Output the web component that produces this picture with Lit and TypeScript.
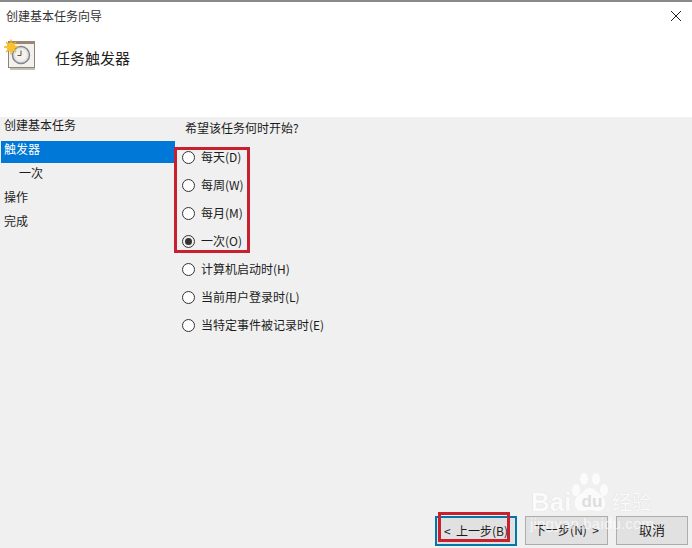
import { LitElement, html, css } from "lit";
import { customElement } from "lit/decorators.js";

const options = ["每天(D)", "每周(W)", "每月(M)", "一次(O)", "计算机启动时(H)", "当前用户登录时(L)", "当特定事件被记录时(E)"];

@customElement("app-root")
export class AppRoot extends LitElement {
  static styles = css`
    :host {
      display: flex;
      flex-direction: column;
      position: relative;
      width: 692px;
      height: 548px;
      overflow: hidden;
      background: #fff;
      color: #1c1c1c;
      font: 12px/24px "Noto Sans CJK SC", "Liberation Sans", sans-serif;
    }
    .header {
      height: 115px;
      border-top: 2px solid #8a8a8a;
      flex: none;
    }
    .titlebar {
      display: flex;
      justify-content: space-between;
      align-items: center;
      height: 28px;
      padding: 0 10px 0 6px;
      color: #333;
    }
    .close { display: block; width: 12px; height: 12px; }
    .heading {
      display: flex;
      align-items: center;
      gap: 19px;
      padding: 8px 0 0 4px;
    }
    .heading svg { display: block; width: 32px; height: 32px; }
    .heading span { font-size: 15px; margin-top: 7px; color: #222; }
    .body {
      flex: 1;
      display: flex;
      background: #f0f0f0;
      position: relative;
    }
    nav { width: 175px; margin-top: -4px; flex: none; }
    nav div { height: 24px; padding-left: 4px; }
    nav div.sel {
      background: #0078d7; color: #fff; margin: 4px 0 -2px 1px; padding-left: 3px;
      height: 22px; line-height: 16px;
    }
    nav div.sub { padding-left: 19px; }
    main { flex: 1; margin-top: -1px; }
    .q { height: 24px; margin-left: 10px; }
    .opts { margin-top: 3px; }
    .opt { display: flex; align-items: center; height: 28px; margin-left: 7px; gap: 6px; }
    .radio {
      width: 13px; height: 13px; box-sizing: border-box; border: 1px solid #333; border-radius: 50%;
      background: #fff; display: flex; align-items: center; justify-content: center; flex: none;
    }
    .radio.on { background: #f0f0f0; }
    .radio.on i { display: block; width: 7px; height: 7px; border-radius: 50%; background: #333; }
    .buttons {
      position: absolute; right: 4px; bottom: 2px; display: flex; gap: 8px; align-items: flex-end;
    }
    button {
      width: 72px; height: 29px; box-sizing: border-box; padding: 0 0 2px;
      background: #e1e1e1; border: 1px solid #adadad; color: #1c1c1c;
      font: 12px "Noto Sans CJK SC", "Liberation Sans", sans-serif;
      white-space: pre;
    }
    button.b1 { width: 82px; height: 30px; border: 2px solid #0078a8; }
    button.b2 { width: 83px; margin-bottom: 1px; }
    button.b3 { margin-bottom: 1px; font-size: 13px; }
    .mark { position: absolute; border: 3px solid #c8202e; box-sizing: border-box; pointer-events: none; }
    .m1 { left: 174px; top: 147px; width: 76px; height: 106px; }
    .m2 { left: 438px; top: 512px; width: 72px; height: 30px; }
    .wm { position: absolute; left: 530px; top: 472px; width: 135px; height: 62px; color: #fbfbfb; text-shadow: 0 0 1px #cfcfcf; }
    .wm svg { position: absolute; left: 41px; top: 1px; width: 38px; height: 39px; }
    .bai { position: absolute; left: 1px; top: 17px; font: bold 26px/26px "Liberation Sans", sans-serif; }
    .du { position: absolute; left: 45px; top: 21px; width: 34px; text-align: center; color: #dedede; text-shadow: none; font: bold 17px/18px "Liberation Sans", sans-serif; }
    .jy { position: absolute; left: 82px; top: 18px; font-size: 20px; line-height: 24px; }
    .url { position: absolute; left: 0; top: 43px; font: 15px/17px "Liberation Sans", sans-serif; color: rgba(255,255,255,.7); text-shadow: none; letter-spacing: .2px; }
  `;

  render() {
    return html`
      <div class="header">
        <div class="titlebar">
          <span>创建基本任务向导</span>
          <svg class="close" viewBox="0 0 12 12"><path d="M1 1L11 11M11 1L1 11" stroke="#222" stroke-width="1" fill="none"/></svg>
        </div>
        <div class="heading">
          <svg viewBox="0 0 32 32">
            <path d="M6 29h25v3H6z" fill="#c4c0b6"/>
            <rect x="4.5" y="4.5" width="26" height="25" fill="#f3f1eb" stroke="#8c8478"/>
            <rect x="4" y="3" width="27" height="3" fill="#9a8672"/>
            <circle cx="17" cy="17" r="8.5" fill="#dfe2e8" stroke="#85858c" stroke-width="1.5"/>
            <circle cx="17" cy="17" r="6" fill="#f6f2e8"/>
            <path d="M17 12.5V17.5H13.5" stroke="#555" stroke-width="1" fill="none"/>
            <g stroke="#f0b01c" stroke-width="1.3"><path d="M7 1.5V16.5M-.5 9H14.5M2 4L12 14M12 4L2 14"/></g>
            <circle cx="7" cy="9" r="4.5" fill="#f7c22e"/>
          </svg>
          <span>任务触发器</span>
        </div>
      </div>
      <div class="body">
        <nav>
          <div>创建基本任务</div>
          <div class="sel">触发器</div>
          <div class="sub">一次</div>
          <div>操作</div>
          <div>完成</div>
        </nav>
        <main>
          <div class="q">希望该任务何时开始?</div>
          <div class="opts">
            ${options.map((o, i) => html`
              <div class="opt">
                <span class="radio ${i === 3 ? "on" : ""}">${i === 3 ? html`<i></i>` : ""}</span>
                <span>${o}</span>
              </div>`)}
          </div>
        </main>
        <div class="buttons">
          <button class="b1">&lt;  上一步(B)</button>
          <button class="b2">下一步(N)  &gt;</button>
          <button class="b3">取消</button>
        </div>
      </div>
      <div class="wm">
        <svg viewBox="0 0 38 39" fill="#fbfbfb">
          <ellipse cx="5" cy="17" rx="4" ry="6"/>
          <ellipse cx="13" cy="6" rx="4" ry="6"/>
          <ellipse cx="25" cy="6" rx="4" ry="6"/>
          <ellipse cx="33" cy="17" rx="4" ry="6"/>
          <path d="M19 15c-5 0-6 4-11 7-6 4-6 16 3 16 3 0 5-1 8-1s5 1 8 1c9 0 9-12 3-16-5-3-6-7-11-7z"/>
        </svg>
        <span class="bai">Bai</span>
        <span class="du">du</span>
        <span class="jy">经验</span>
        <span class="url">jingyan.baidu.com</span>
      </div>
      <div class="mark m1"></div>
      <div class="mark m2"></div>
    `;
  }
}
